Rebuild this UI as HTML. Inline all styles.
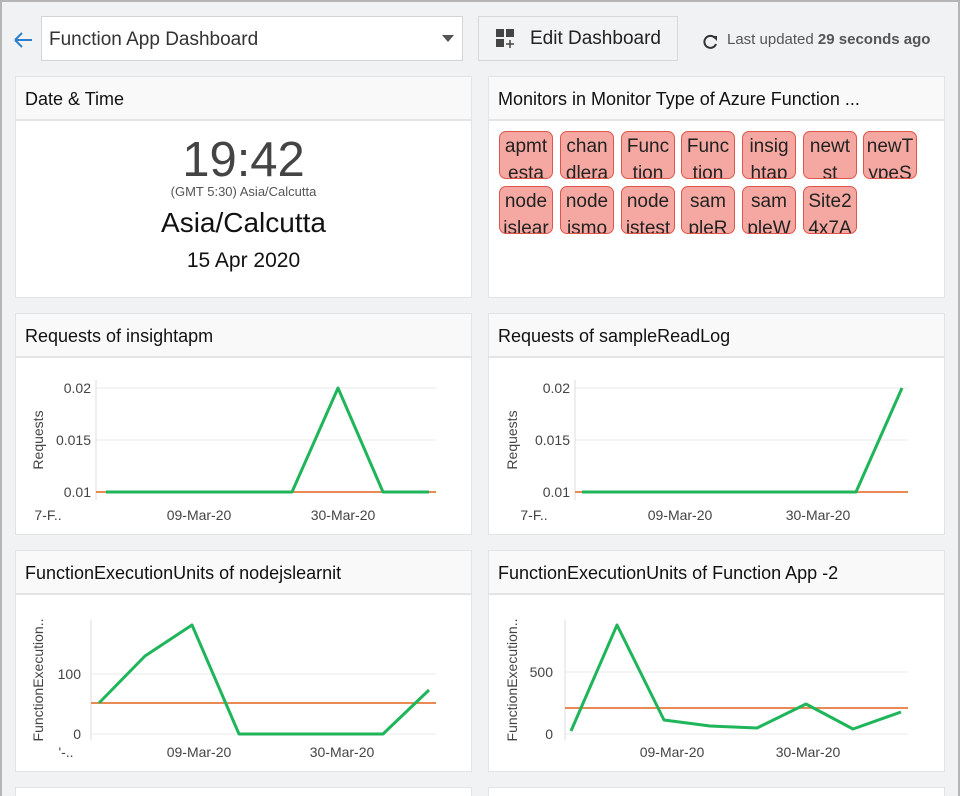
<!DOCTYPE html>
<html><head><meta charset="utf-8"><style>
*{box-sizing:border-box;margin:0;padding:0}
html,body{width:960px;height:796px;overflow:hidden}
body{background:#f1f2f4;font-family:"Liberation Sans",sans-serif;position:relative}
.frame{position:absolute;left:0;top:0;width:960px;height:796px;border:2px solid #b5b5b5;border-bottom:none;pointer-events:none}
.abs{position:absolute}
.panel{position:absolute;background:#fff;border:1px solid #e2e3e5;width:457px;height:222px}
.ph{height:44px;background:#f9f9f9;border-bottom:2px solid #e4e4e4;font-size:18px;color:#111;padding:12px 0 0 9px;white-space:nowrap;overflow:hidden}
.tag{position:absolute;width:54px;height:48px;background:#f5a8a1;border:1px solid #e0554a;border-radius:7px;overflow:hidden;font-size:19px;color:#222;text-align:center;line-height:27px;padding-top:1px;white-space:nowrap}
svg text{font-family:"Liberation Sans",sans-serif}
</style></head><body>
<svg class="abs" style="left:12px;top:30px" width="24" height="20"><path d="M3 10H20M3 10L10 3M3 10L10 17" stroke="#2f7fd1" stroke-width="2" fill="none"/></svg>
<div class="abs" style="left:41px;top:16px;width:422px;height:45px;background:#fff;border:1px solid #d4d4d4;font-size:19px;color:#333;padding:12px 0 0 7px">Function App Dashboard</div>
<div class="abs" style="left:442px;top:35px;width:0;height:0;border-left:6px solid transparent;border-right:6px solid transparent;border-top:7px solid #555"></div>
<div class="abs" style="left:478px;top:16px;width:200px;height:45px;background:#f2f3f5;border:1px solid #d8d8d8;font-size:19px;color:#222;padding:11px 0 0 51px">Edit Dashboard</div>
<svg class="abs" style="left:496px;top:29px" width="22" height="22"><rect x="0" y="0" width="8" height="8" fill="#444"/><rect x="10" y="0" width="8" height="8" fill="#444"/><rect x="0" y="10" width="8" height="8" fill="#444"/><path d="M14 11V19M10 15H18" stroke="#444" stroke-width="1.5"/></svg>
<svg class="abs" style="left:702px;top:33px" width="18" height="18"><path d="M13 5A6 6 0 1 0 14 11" stroke="#333" stroke-width="2" fill="none"/><path d="M10 3L15 3L15 8Z" fill="#333"/></svg>
<div class="abs" style="left:727px;top:31px;font-size:15px;color:#555;white-space:nowrap">Last updated <b>29 seconds ago</b></div>

<div class="panel" style="left:15px;top:76px"><div class="ph">Date &amp; Time</div>
<div style="text-align:center;color:#444;font-size:49px;margin-top:13px;line-height:52px">19:42</div>
<div style="text-align:center;color:#555;font-size:13px;margin-top:-2px">(GMT 5:30) Asia/Calcutta</div>
<div style="text-align:center;color:#111;font-size:28px;margin-top:8px">Asia/Calcutta</div>
<div style="text-align:center;color:#111;font-size:21px;margin-top:10px">15 Apr 2020</div></div>

<div class="panel" style="left:488px;top:76px"><div class="ph">Monitors in Monitor Type of Azure Function ...</div></div>
<div class="tag" style="left:499px;top:131px">apmt<br>esta</div>
<div class="tag" style="left:560px;top:131px">chan<br>dlera</div>
<div class="tag" style="left:621px;top:131px">Func<br>tion</div>
<div class="tag" style="left:681px;top:131px">Func<br>tion</div>
<div class="tag" style="left:742px;top:131px">insig<br>htap</div>
<div class="tag" style="left:803px;top:131px">newt<br>st</div>
<div class="tag" style="left:863px;top:131px">newT<br>ypeS</div>
<div class="tag" style="left:499px;top:186px">node<br>jslear</div>
<div class="tag" style="left:560px;top:186px">node<br>jsmo</div>
<div class="tag" style="left:621px;top:186px">node<br>jstest</div>
<div class="tag" style="left:681px;top:186px">sam<br>pleR</div>
<div class="tag" style="left:742px;top:186px">sam<br>pleW</div>
<div class="tag" style="left:803px;top:186px">Site2<br>4x7A</div>

<div class="panel" style="left:15px;top:313px"><div class="ph">Requests of insightapm</div></div>
<div class="panel" style="left:488px;top:313px"><div class="ph">Requests of sampleReadLog</div></div>
<div class="panel" style="left:15px;top:550px"><div class="ph">FunctionExecutionUnits of nodejslearnit</div></div>
<div class="panel" style="left:488px;top:550px"><div class="ph">FunctionExecutionUnits of Function App -2</div></div>
<div class="panel" style="left:15px;top:787px;height:9px;border-bottom:none"></div>
<div class="panel" style="left:488px;top:787px;height:9px;border-bottom:none"></div>

<svg class="abs" style="left:0;top:0" width="960" height="796" font-size="14" fill="#444">
<g stroke="#e8e8e8" stroke-width="1"><path d="M96 388H436M96 440H436M96 492H436M575 388H908M575 440H908M575 492H908M91 674H436M91 734H436M565 672H908M565 734H908"/></g>
<g stroke="#ddd"><path d="M96 380V500M575 380V500M91 620V740M565 620V740"/></g>
<g text-anchor="end"><text x="91" y="393">0.02</text><text x="91" y="445">0.015</text><text x="91" y="497">0.01</text>
<text x="570" y="393">0.02</text><text x="570" y="445">0.015</text><text x="570" y="497">0.01</text>
<text x="81" y="679">100</text><text x="81" y="739">0</text><text x="553" y="677">500</text><text x="553" y="739">0</text></g>
<g text-anchor="middle"><text x="48" y="520">7-F..</text><text x="199" y="520">09-Mar-20</text><text x="343" y="520">30-Mar-20</text>
<text x="534" y="520">7-F..</text><text x="680" y="520">09-Mar-20</text><text x="818" y="520">30-Mar-20</text>
<text x="66" y="757">'-..</text><text x="199" y="757">09-Mar-20</text><text x="342" y="757">30-Mar-20</text>
<text x="672" y="757">09-Mar-20</text><text x="808" y="757">30-Mar-20</text>
<text transform="translate(43,440) rotate(-90)">Requests</text><text transform="translate(517,440) rotate(-90)">Requests</text>
<text transform="translate(43,680) rotate(-90)">FunctionExecution..</text><text transform="translate(517,680) rotate(-90)">FunctionExecution..</text></g>
<g stroke="#e0641e" stroke-width="1.5" fill="none"><path d="M96 492H436M575 492H908M91 703H436M565 708H908"/></g>
<g stroke="#1fb55a" stroke-width="3" fill="none" stroke-linejoin="round">
<path d="M106 492H292L338 388L383 492H429"/>
<path d="M582 492H856L902 388"/>
<path d="M99 703L145 656L192 625L239 734H383L429 690"/>
<path d="M571 731L617 625L664 720L710 726L757 728L806 704L853 729L901 712"/>
</g></svg>
<div class="frame"></div>
</body></html>
